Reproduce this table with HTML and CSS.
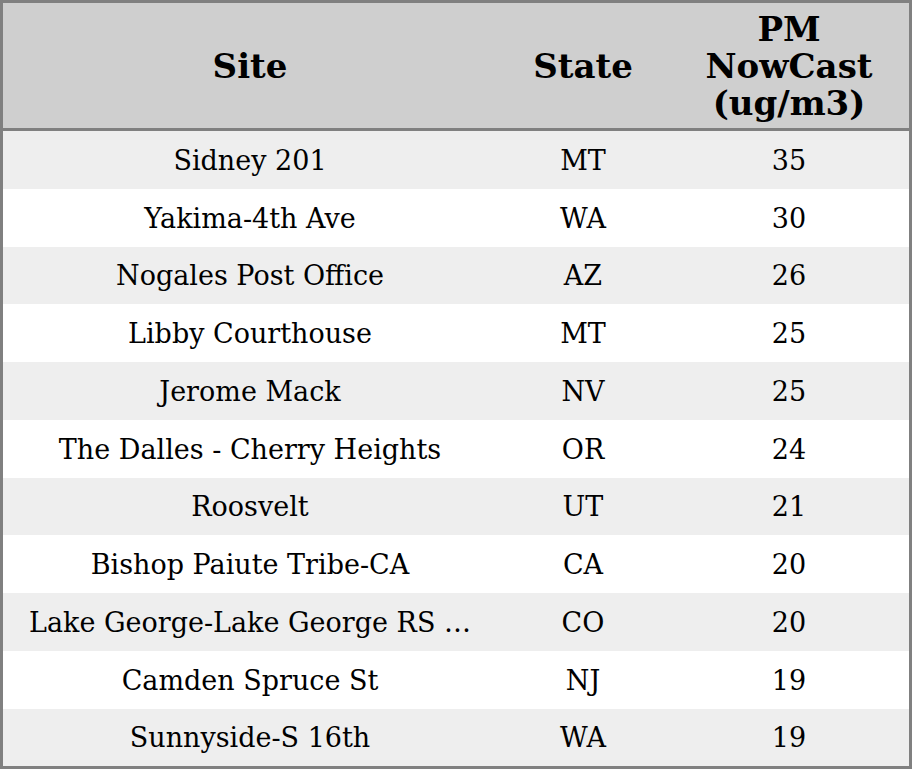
FILE: index.html
```html
<!DOCTYPE html>
<html>
<head>
<meta charset="utf-8">
<link rel="stylesheet" href="styles.css">
</head>
<body>
<table class="aq-table">
  <colgroup>
    <col class="col-site">
    <col class="col-state">
    <col class="col-pm">
  </colgroup>
  <thead>
    <tr>
      <th>Site</th>
      <th>State</th>
      <th>PM<br>NowCast<br>(ug/m3)</th>
    </tr>
  </thead>
  <tbody>
    <tr><td>Sidney 201</td><td>MT</td><td>35</td></tr>
    <tr><td>Yakima-4th Ave</td><td>WA</td><td>30</td></tr>
    <tr><td>Nogales Post Office</td><td>AZ</td><td>26</td></tr>
    <tr><td>Libby Courthouse</td><td>MT</td><td>25</td></tr>
    <tr><td>Jerome Mack</td><td>NV</td><td>25</td></tr>
    <tr><td>The Dalles - Cherry Heights</td><td>OR</td><td>24</td></tr>
    <tr><td>Roosvelt</td><td>UT</td><td>21</td></tr>
    <tr><td>Bishop Paiute Tribe-CA</td><td>CA</td><td>20</td></tr>
    <tr><td>Lake George-Lake George RS …</td><td>CO</td><td>20</td></tr>
    <tr><td>Camden Spruce St</td><td>NJ</td><td>19</td></tr>
    <tr><td>Sunnyside-S 16th</td><td>WA</td><td>19</td></tr>
  </tbody>
</table>
</body>
</html>
```
FILE: styles.css
```css
html, body {
  margin: 0;
  padding: 0;
  background: #ffffff;
}
.aq-table {
  width: 912px;
  height: 769px;
  border-collapse: separate;
  border-spacing: 0;
  border: 3px solid #808080;
  box-sizing: border-box;
  table-layout: fixed;
  font-family: "DejaVu Serif", serif;
  color: #000;
}
.col-site { width: 494px; }
.col-state { width: 172px; }
.col-pm { width: 240px; }
.aq-table th {
  background: #cfcfcf;
  font-size: 34px;
  font-weight: bold;
  line-height: 37px;
  height: 123px;
  padding: 2px 0 0 0;
  text-align: center;
  vertical-align: middle;
  border-bottom: 3px solid #808080;
}
.aq-table td {
  font-size: 27px;
  line-height: 30px;
  height: 55.75px;
  padding: 2px 0 0 0;
  text-align: center;
  vertical-align: middle;
  white-space: nowrap;
}
.aq-table tbody tr:nth-child(odd) td {
  background: #eeeeee;
}
.aq-table tbody tr:nth-child(even) td {
  background: #ffffff;
}
```
